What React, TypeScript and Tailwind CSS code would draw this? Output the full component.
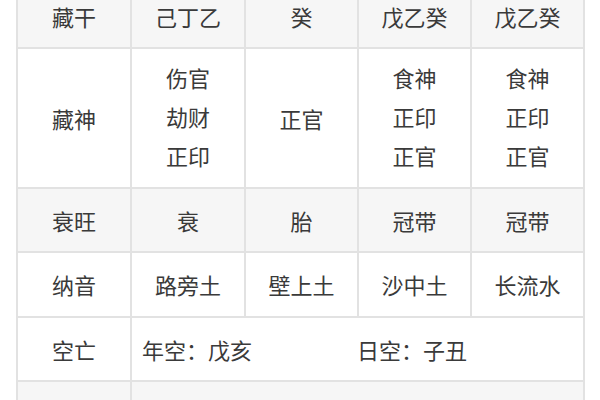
const cell = "border-2 border-[#e2e2e2] text-center align-middle";

type Row = { label: string; cells: string[][]; gray?: boolean; h: string };

const rows: Row[] = [
  { label: "藏干", cells: [["己丁乙"], ["癸"], ["戊乙癸"], ["戊乙癸"]], gray: true, h: "h-[64px]" },
  {
    label: "藏神",
    cells: [["伤官", "劫财", "正印"], ["正官"], ["食神", "正印", "正官"], ["食神", "正印", "正官"]],
    h: "h-[140px]",
  },
  { label: "衰旺", cells: [["衰"], ["胎"], ["冠带"], ["冠带"]], gray: true, h: "h-[64px]" },
  { label: "纳音", cells: [["路旁土"], ["壁上土"], ["沙中土"], ["长流水"]], h: "h-[65px]" },
];

export default function App() {
  return (
    <div
      className="h-[400px] w-[600px] overflow-hidden bg-white text-[22px] leading-[39px] text-[#3a3a3a]"
      style={{ fontFamily: '"Noto Sans CJK SC", "Noto Sans", sans-serif' }}
    >
      <table className="ml-[16px] -mt-[17px] w-[567px] table-fixed border-collapse">
        <colgroup>
          <col className="w-[114px]" />
          <col className="w-[114px]" />
          <col className="w-[113px]" />
          <col className="w-[113px]" />
          <col className="w-[113px]" />
        </colgroup>
        <tbody>
          {rows.map((r) => (
            <tr key={r.label} className={`${r.h} ${r.gray ? "bg-[#f6f6f6]" : "bg-white"}`}>
              <td className={cell}>{r.label}</td>
              {r.cells.map((lines, i) => (
                <td key={i} className={`${cell} ${lines.length > 1 ? "pb-[4px]" : ""}`}>
                  {lines.map((l, j) => (
                    <div key={j}>{l}</div>
                  ))}
                </td>
              ))}
            </tr>
          ))}
          <tr className="h-[64px] bg-white">
            <td className={cell}>空亡</td>
            <td colSpan={4} className="border-2 border-[#e2e2e2] pl-[10px] text-left align-middle">
              <div className="flex">
                <span className="w-[215px]">年空：戊亥</span>
                <span>日空：子丑</span>
              </div>
            </td>
          </tr>
          <tr className="h-[64px] bg-[#f6f6f6] text-[#9a9a9a]">
            <td className={`${cell} pt-[12px] align-top`}>神煞</td>
            <td colSpan={4} className="border-2 border-[#e2e2e2] pl-[10px] pt-[12px] text-left align-top">
              年柱：天乙贵人 太极贵人 将星 华盖 月德
            </td>
          </tr>
        </tbody>
      </table>
    </div>
  );
}
